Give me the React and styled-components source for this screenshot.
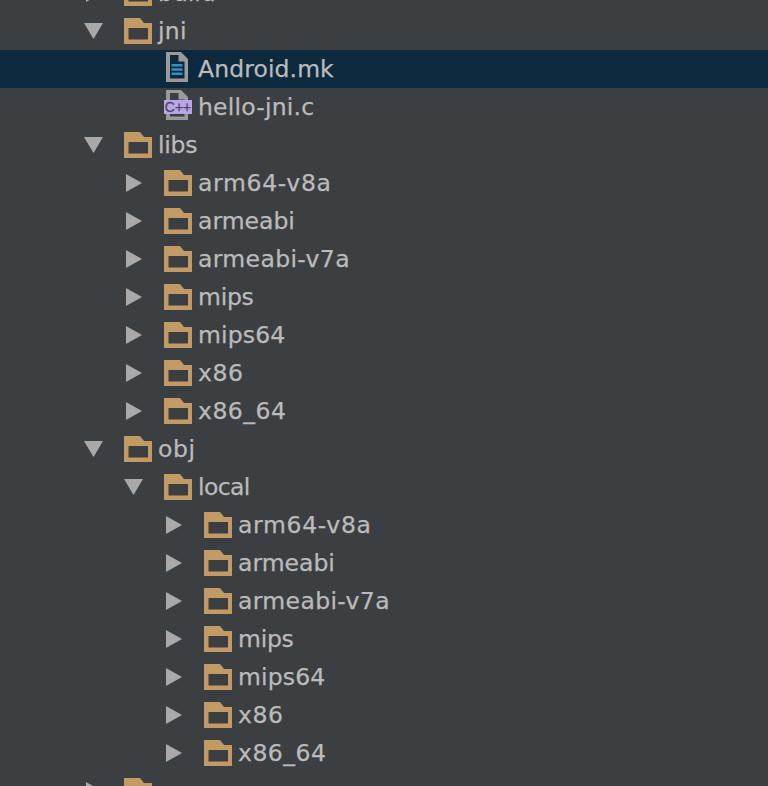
import React from 'react'
import styled, { createGlobalStyle } from 'styled-components'

const Global = createGlobalStyle`
    html, body {
        margin: 0;
        padding: 0;
        background: #3c3f41;
    }
`

const Page = styled.div`
    width: 768px;
    height: 786px;
    overflow: hidden;
    background: #3c3f41;
`

const Tree = styled.div`
    margin-top: -26px;
`

const Row = styled.div`
    height: 38px;
    display: flex;
    align-items: center;
    box-sizing: border-box;
    padding-left: ${props => 84 + props.depth * 40}px;
    background: ${props => props.selected ? '#0d293e' : 'transparent'};
`

const Arrow = styled.svg`
    width: 20px;
    height: 18px;
    flex: none;
    margin-right: 20px;
    fill: #a9a9a9;
`

const Spacer = styled.div`
    width: 40px;
    flex: none;
`

const FolderShape = styled.svg`
    width: 28px;
    height: 26px;
    flex: none;
    margin-bottom: 1px;
    fill: #c19a65;
`

const FileBox = styled.div`
    position: relative;
    width: 28px;
    height: 30px;
    flex: none;
    margin-bottom: 4px;
`

const FileShape = styled.svg`
    display: block;
    width: 28px;
    height: 30px;
`

const Badge = styled.span`
    position: absolute;
    left: 0;
    top: 10px;
    width: 28px;
    height: 14px;
    background: #b9a5ec;
    color: #4f4a5c;
    font-family: "Liberation Sans", sans-serif;
    font-size: 14px;
    line-height: 14px;
    text-align: center;
    -webkit-text-stroke: 0.3px #4f4a5c;
`

const Label = styled.span`
    font-family: "DejaVu Sans", sans-serif;
    font-size: 23.5px;
    color: #bbbbbb;
    white-space: nowrap;
    margin-left: 6px;
    letter-spacing: ${props => props.track || 0}px;
    -webkit-text-stroke: 0.25px #bbbbbb;
`

const ArrowIcon = ({ open }) => (
    <Arrow viewBox="0 0 20 18">
        {open ? <path d="M0 1h19l-9.500 16z" /> : <path d="M2 0l16 9-16 9z" />}
    </Arrow>
)

const FolderIcon = () => (
    <FolderShape viewBox="0 0 28 26">
        <path fillRule="evenodd" d="M0 0h16l4 5h8v21H0zM4.500 10v11.500h19.500V10z" />
    </FolderShape>
)

const filePath = 'M2 0h15l7 7v23H2zM6 3v23.500h14.500V9.500h-6V3z'

const TextFile = () => (
    <FileBox>
        <FileShape viewBox="0 0 28 30">
            <path fill="#9a9a9a" fillRule="evenodd" d={filePath} />
            <path fill="#3b8dbd" d="M7.500 12h11v2.500h-11zM7.500 16.200h11v2.500h-11zM7.500 20.400h11v2.500h-11z" />
        </FileShape>
    </FileBox>
)

const CppFile = () => (
    <FileBox>
        <FileShape viewBox="0 0 28 30">
            <path fill="#9a9a9a" fillRule="evenodd" d={filePath} />
        </FileShape>
        <Badge>C++</Badge>
    </FileBox>
)

const folders = [
    { name: 'arm64-v8a', track: 0.67 },
    { name: 'armeabi' },
    { name: 'armeabi-v7a', track: 0.36 },
    { name: 'mips', track: -0.25 },
    { name: 'mips64', track: 0.15 },
    { name: 'x86', track: 0.6 },
    { name: 'x86_64', track: 0.5 },
]

const FolderRow = ({ name, depth, open, track }) => (
    <Row depth={depth}>
        <ArrowIcon open={open} />
        <FolderIcon />
        {name && <Label track={track}>{name}</Label>}
    </Row>
)

const FileRow = ({ name, icon, selected, track }) => (
    <Row depth={1} selected={selected}>
        <Spacer />
        {icon}
        <Label track={track}>{name}</Label>
    </Row>
)

export default function App() {
    return (
        <Page>
            <Global />
            <Tree>
                <FolderRow name="build" depth={0} />
                <FolderRow name="jni" depth={0} open track={0.3} />
                <FileRow name="Android.mk" icon={<TextFile />} selected track={0.1} />
                <FileRow name="hello-jni.c" icon={<CppFile />} track={0.2} />
                <FolderRow name="libs" depth={0} open track={-0.25} />
                {folders.map(f => <FolderRow key={f.name} {...f} depth={1} />)}
                <FolderRow name="obj" depth={0} open track={0.6} />
                <FolderRow name="local" depth={1} open track={-0.6} />
                {folders.map(f => <FolderRow key={f.name} {...f} depth={2} />)}
                <FolderRow depth={0} />
            </Tree>
        </Page>
    )
}
